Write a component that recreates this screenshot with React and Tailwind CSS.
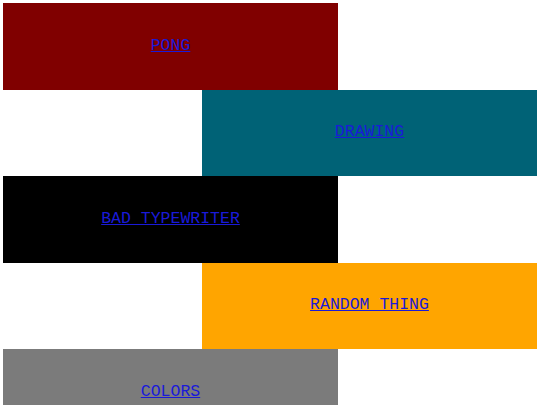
const items = [
  { label: 'PONG', bg: 'bg-[#800000]', side: 'self-start' },
  { label: 'DRAWING', bg: 'bg-[#006276]', side: 'self-end' },
  { label: 'BAD TYPEWRITER', bg: 'bg-black', side: 'self-start' },
  { label: 'RANDOM THING', bg: 'bg-[#ffa500]', side: 'self-end' },
  { label: 'COLORS', bg: 'bg-[#7b7b7b]', side: 'self-start' },
];

export default function App() {
  return (
    <div className="flex flex-col w-[540px] h-[405px] overflow-hidden bg-white p-[3px] font-['Liberation_Mono',monospace]">
      {items.map((item) => (
        <div
          key={item.label}
          className={`${item.bg} ${item.side} w-[335px] h-[86.5px] shrink-0 flex items-center justify-center`}
        >
          <a href="#" className="text-[16.5px] text-[#1a1ad8] underline">
            {item.label}
          </a>
        </div>
      ))}
    </div>
  );
}
